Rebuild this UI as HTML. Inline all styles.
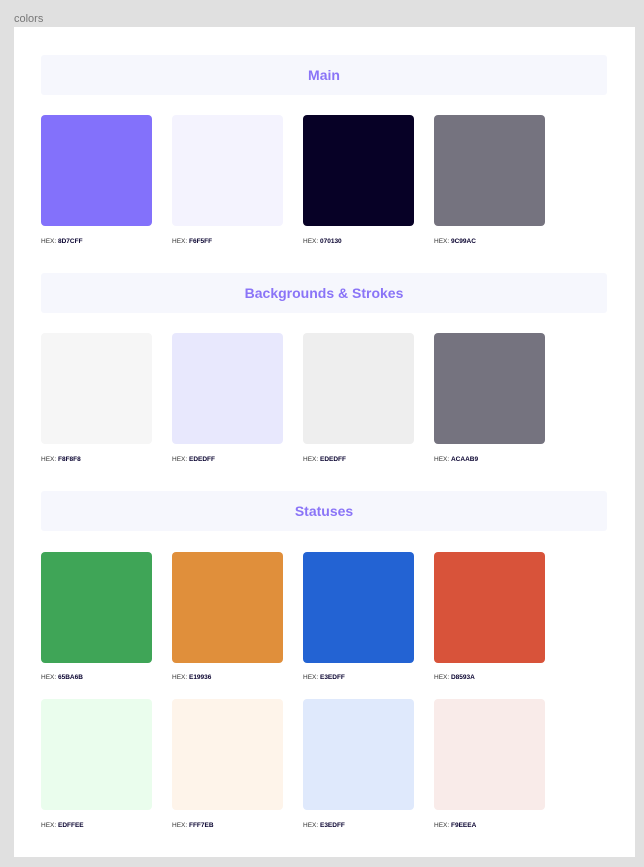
<!DOCTYPE html><html><head><style>
body{margin:0;width:644px;height:867px;background:#e0e0e0;font-family:"Liberation Sans",sans-serif;position:relative;overflow:hidden}
.t{position:absolute;left:14px;top:13px;font-size:11px;color:#777}
.p{position:absolute;left:14px;top:27px;width:621px;height:830px;background:#fff}
.h{position:absolute;left:41px;width:566px;height:40px;background:#f6f7fd;border-radius:3px;color:#8a74f7;font-weight:bold;font-size:14px;text-align:center;line-height:40px}
.s{position:absolute;width:111px;height:111px;border-radius:4px}
.l{position:absolute;font-size:6.5px;color:#333}
.l b{color:#07012e}
</style></head><body>
<div class="t">colors</div><div class="p"></div>
<div class="h" style="top:55px">Main</div>
<div class="h" style="top:273px">Backgrounds &amp; Strokes</div>
<div class="h" style="top:491px">Statuses</div>
<div class="s" style="left:41px;top:115px;background:#8371fb"></div>
<div class="s" style="left:172px;top:115px;background:#f4f3fe"></div>
<div class="s" style="left:303px;top:115px;background:#070126"></div>
<div class="s" style="left:434px;top:115px;background:#75737f"></div>
<div class="l" style="left:41px;top:238px">HEX: <b>8D7CFF</b></div>
<div class="l" style="left:172px;top:238px">HEX: <b>F6F5FF</b></div>
<div class="l" style="left:303px;top:238px">HEX: <b>070130</b></div>
<div class="l" style="left:434px;top:238px">HEX: <b>9C99AC</b></div>
<div class="s" style="left:41px;top:333px;background:#f6f6f6"></div>
<div class="s" style="left:172px;top:333px;background:#e8e8fd"></div>
<div class="s" style="left:303px;top:333px;background:#eeeeee"></div>
<div class="s" style="left:434px;top:333px;background:#75737f"></div>
<div class="l" style="left:41px;top:456px">HEX: <b>F8F8F8</b></div>
<div class="l" style="left:172px;top:456px">HEX: <b>EDEDFF</b></div>
<div class="l" style="left:303px;top:456px">HEX: <b>EDEDFF</b></div>
<div class="l" style="left:434px;top:456px">HEX: <b>ACAAB9</b></div>
<div class="s" style="left:41px;top:552px;background:#3fa557"></div>
<div class="s" style="left:172px;top:552px;background:#e08f3b"></div>
<div class="s" style="left:303px;top:552px;background:#2363d3"></div>
<div class="s" style="left:434px;top:552px;background:#d8533a"></div>
<div class="l" style="left:41px;top:674px">HEX: <b>65BA6B</b></div>
<div class="l" style="left:172px;top:674px">HEX: <b>E19936</b></div>
<div class="l" style="left:303px;top:674px">HEX: <b>E3EDFF</b></div>
<div class="l" style="left:434px;top:674px">HEX: <b>D8593A</b></div>
<div class="s" style="left:41px;top:699px;background:#eafded"></div>
<div class="s" style="left:172px;top:699px;background:#fef4ea"></div>
<div class="s" style="left:303px;top:699px;background:#dfe9fc"></div>
<div class="s" style="left:434px;top:699px;background:#f9ebe9"></div>
<div class="l" style="left:41px;top:822px">HEX: <b>EDFFEE</b></div>
<div class="l" style="left:172px;top:822px">HEX: <b>FFF7EB</b></div>
<div class="l" style="left:303px;top:822px">HEX: <b>E3EDFF</b></div>
<div class="l" style="left:434px;top:822px">HEX: <b>F9EEEA</b></div>
</body></html>
